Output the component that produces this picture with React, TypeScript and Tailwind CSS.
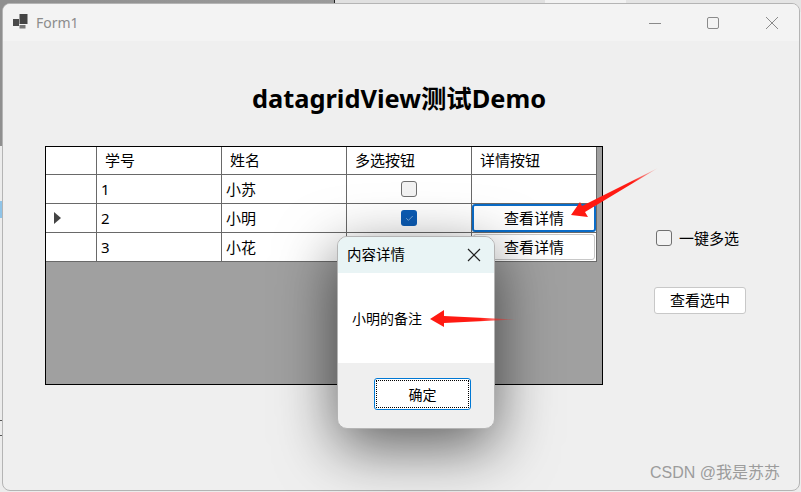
import { Check } from "lucide-react";

type Row = { id: string; name: string; checked: boolean | null; selected?: boolean; button?: "focus" | "plain" };

const rows: Row[] = [
  { id: "1", name: "小苏", checked: false },
  { id: "2", name: "小明", checked: true, selected: true, button: "focus" },
  { id: "3", name: "小花", checked: null, button: "plain" },
];

const cell = "border-r border-b border-[#696969] bg-white flex items-center";

function Box({ checked }: { checked?: boolean }) {
  if (checked) {
    return (
      <span className="flex h-4 w-4 items-center justify-center rounded-[3px] bg-[#0b5cb5]">
        <Check size={9} strokeWidth={1.25} className="text-white" />
      </span>
    );
  }
  return <span className="block h-4 w-4 rounded-[3px] border border-[#707070] bg-[#f3f3f3]" />;
}

export default function App() {
  return (
    <div className="relative h-[492px] w-[801px] overflow-hidden bg-[#ececec] font-['Noto_Sans','Noto_Sans_CJK_SC',sans-serif] text-black">
      {/* desktop showing behind the window */}
      <div className="absolute left-0 top-0 h-3 w-full bg-[linear-gradient(90deg,#8f8f8f_0,#9a9a9a_334px,#222_334px,#222_335px,#e0e0e0_335px,#e0e0e0_545px,#f2f2f2_545px,#f2f2f2_626px,#e4e4e4_626px)]" />
      <div className="absolute left-0 top-0 h-full w-3 bg-[linear-gradient(180deg,#8f8f8f_0,#8f8f8f_146px,#ececec_146px,#ececec_201px,#8fc4e8_201px,#8fc4e8_218px,#ececec_218px,#ececec_420px,#555_420px,#555_421px,#ececec_421px,#ececec_435px,#555_435px,#555_436px,#ececec_436px)]" />

      {/* form window */}
      <div className="relative ml-[2px] mt-[3px] h-[488px] w-[798px] overflow-hidden rounded-lg border border-[#b4b4b4] bg-[#efefef]">
        <div className="flex h-[37px] items-center bg-[#f3f3f3]">
          <svg width="17" height="17" viewBox="0 0 17 17" className="ml-[9px] mt-[-3px]">
            <rect x="1" y="6" width="6" height="7" fill="#4a4a4a" />
            <rect x="7.5" y="1" width="8" height="10" fill="#444" />
            <rect x="7.5" y="12" width="6" height="3.5" fill="#777" />
          </svg>
          <span className="ml-[7px] mt-[-1px] text-[14px] text-[#8c8c8c]">Form1</span>
          <div className="ml-auto flex items-center">
            <svg width="14" height="14" viewBox="0 0 14 14" className="text-[#8a8a8a]">
              <path d="M1 7.5H13" stroke="currentColor" fill="none" />
            </svg>
            <svg width="14" height="14" viewBox="0 0 14 14" className="ml-[44px] text-[#8a8a8a]">
              <rect x="1.5" y="1.5" width="11" height="11" rx="1.5" stroke="currentColor" fill="none" />
            </svg>
            <svg width="14" height="14" viewBox="0 0 14 14" className="ml-[45px] mr-[20px] text-[#8a8a8a]">
              <path d="M1 1L13 13M13 1L1 13" stroke="currentColor" fill="none" />
            </svg>
          </div>
        </div>

        <h1 className="mt-[38px] h-[38px] pr-[4px] text-center text-[25.4px] font-bold leading-[38px]">datagridView测试Demo</h1>

        <div className="ml-[42px] mt-[29px] flex items-start">
          {/* data grid */}
          <div className="h-[239px] w-[558px] border border-black bg-[#a0a0a0]">
            <div className="grid w-[551px] grid-cols-[51px_125px_125px_125px_125px] grid-rows-[28px_29px_29px_29px] text-[15px]">
              <div className={cell} />
              <div className={`${cell} pl-2`}>学号</div>
              <div className={`${cell} pl-2`}>姓名</div>
              <div className={`${cell} pl-2`}>多选按钮</div>
              <div className={`${cell} pl-2`}>详情按钮</div>
              {rows.map((row) => (
                <div key={row.id} className="contents">
                  <div className={`${cell} pl-[7px]`}>
                    {row.selected ? (
                      <svg width="9" height="14" viewBox="0 0 9 14" className="text-[#444]">
                        <path d="M1 1L8 7L1 13Z" fill="currentColor" />
                      </svg>
                    ) : null}
                  </div>
                  <div className={`${cell} pl-1`}>{row.id}</div>
                  <div className={`${cell} pl-1`}>{row.name}</div>
                  <div className={`${cell} justify-center`}>
                    {row.checked === null ? null : <Box checked={row.checked} />}
                  </div>
                  <div className={cell}>
                    {row.button === "focus" ? (
                      <button className="h-full w-full rounded-[3px] border-2 border-[#0a6cc8] bg-white text-[15px]">查看详情</button>
                    ) : null}
                    {row.button === "plain" ? (
                      <button className="mx-px h-[26px] w-full rounded-[3px] border border-[#c8c8c8] bg-white text-[15px]">查看详情</button>
                    ) : null}
                  </div>
                </div>
              ))}
            </div>
          </div>

          {/* side controls */}
          <div className="ml-[51px] mt-[84px] flex flex-col items-start text-[15px]">
            <label className="ml-[2px] flex h-4 items-center gap-[7px]">
              <Box />
              <span>一键多选</span>
            </label>
            <button className="mt-[41px] h-[27px] w-[92px] rounded-[3px] border border-[#c8c8c8] bg-white text-[15px]">查看选中</button>
          </div>
        </div>
      </div>

      {/* message dialog */}
      <div className="absolute left-[337px] top-[236px] flex h-[193px] w-[158px] flex-col overflow-hidden rounded-[10px] border border-[#b4b4b4] bg-[#efefef] shadow-[0_18px_60px_rgba(0,0,0,0.6)]">
        <div className="flex h-[36px] items-center justify-between bg-[#e9f4f5] pl-[9px] pr-[12px] text-[14.5px]">
          <span>内容详情</span>
          <svg width="16" height="16" viewBox="0 0 16 16" className="text-[#222]">
            <path d="M2 2L14 14M14 2L2 14" stroke="currentColor" strokeWidth="1.2" fill="none" />
          </svg>
        </div>
        <div className="flex h-[90px] items-center bg-white pl-[14px] text-[14px]">小明的备注</div>
        <div className="flex flex-1 items-center pb-[3px] pl-[36px]">
          <button className="flex h-8 w-[97px] items-center justify-center rounded-[3px] border border-[#0078d4] bg-white p-px">
            <span className="flex h-full w-full items-center justify-center border border-dotted border-black text-[14px]">确定</span>
          </button>
        </div>
      </div>

      {/* annotation arrows */}
      <svg width="801" height="492" className="pointer-events-none absolute left-0 top-0">
        <defs>
          <linearGradient id="fadeA" x1="571" y1="215" x2="658" y2="168" gradientUnits="userSpaceOnUse">
            <stop offset="0" stopColor="#ff1a12" />
            <stop offset="0.7" stopColor="#ff1a12" />
            <stop offset="1" stopColor="#ff1a12" stopOpacity="0.1" />
          </linearGradient>
          <linearGradient id="fadeB" x1="430" y1="319" x2="514" y2="319" gradientUnits="userSpaceOnUse">
            <stop offset="0" stopColor="#ff1a12" />
            <stop offset="0.6" stopColor="#ff1a12" />
            <stop offset="1" stopColor="#ff1a12" stopOpacity="0.1" />
          </linearGradient>
        </defs>
        <polygon points="571,215 580,202 582,206 658,168 585,212 588,217" fill="url(#fadeA)" />
        <polygon points="430,319 444,310 444,316 516,319.5 444,323 444,327" fill="url(#fadeB)" />
      </svg>

      <span className="absolute left-[650px] top-[462px] font-['Liberation_Sans','Noto_Sans_CJK_SC',sans-serif] text-[16px] leading-[22px] text-[#9c9c9c]">
        CSDN @我是苏苏
      </span>
    </div>
  );
}
